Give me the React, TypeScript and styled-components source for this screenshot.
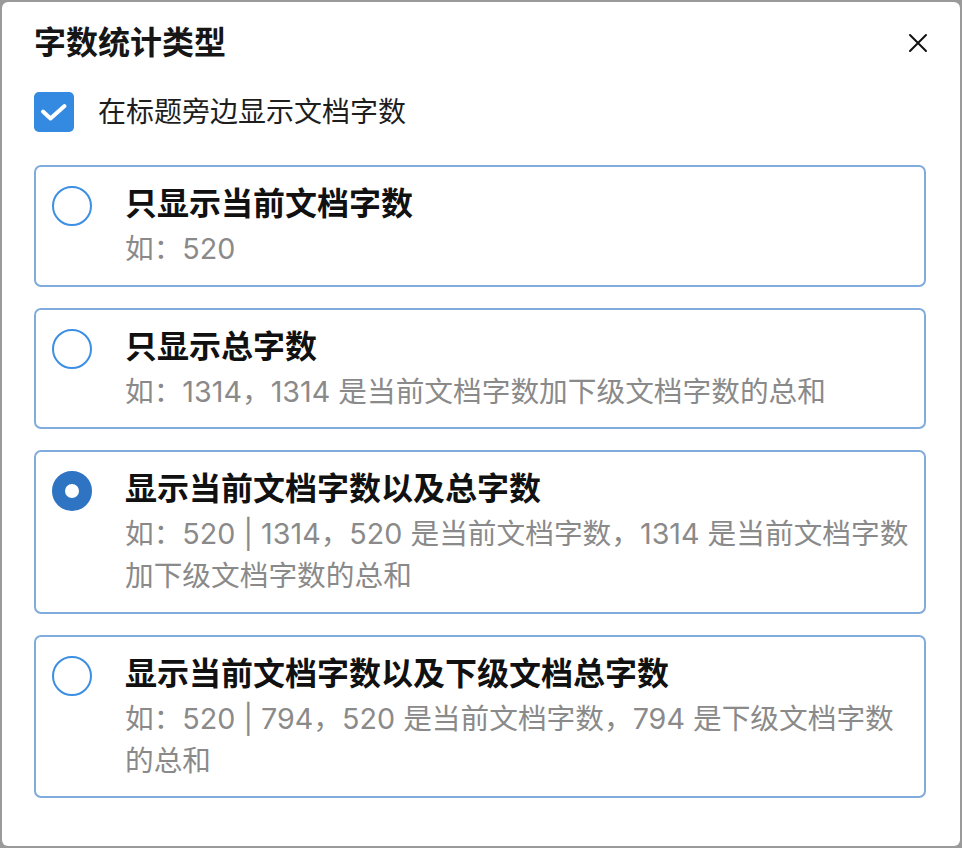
import React, { useState } from "react";
import styled, { createGlobalStyle } from "styled-components";

const GlobalStyle = createGlobalStyle`
  html, body {
    margin: 0;
    padding: 0;
    background: #9a9a9a;
  }
  body {
    font-family: Inter, "Noto Sans CJK SC", sans-serif;
  }
  * { box-sizing: border-box; }
`;

const Frame = styled.div`
  width: 962px;
  height: 848px;
  padding: 2px;
  background: #9a9a9a;
`;

const Dialog = styled.div`
  height: 100%;
  background: #ffffff;
  border-radius: 6px;
  padding: 20px 34px 0 32px;
  display: flex;
  flex-direction: column;
`;

const Header = styled.div`
  display: flex;
  align-items: center;
  justify-content: space-between;
  height: 42px;
`;

const Title = styled.h2`
  margin: 0;
  font-size: 32px;
  line-height: 42px;
  font-weight: 700;
  color: #161616;
`;

const CloseButton = styled.button`
  width: 20px;
  height: 20px;
  margin-right: -2px;
  padding: 0;
  border: none;
  background: transparent;
  display: flex;
  align-items: center;
  justify-content: center;
  cursor: pointer;
  color: #111;
`;

const CheckRow = styled.label`
  margin-top: 28px;
  display: flex;
  align-items: center;
  gap: 24px;
  cursor: pointer;
`;

const CheckBox = styled.span<{ $checked: boolean }>`
  width: 40px;
  height: 40px;
  border-radius: 5px;
  background: ${(p) => (p.$checked ? "#3489e0" : "#fff")};
  border: ${(p) => (p.$checked ? "none" : "2px solid #3489e0")};
  display: flex;
  flex-shrink: 0;
`;

const CheckLabel = styled.span`
  font-size: 28px;
  line-height: 40px;
  color: #1e1e1e;
`;

const List = styled.div`
  margin-top: 33px;
  display: flex;
  flex-direction: column;
  gap: 21px;
`;

const Card = styled.div`
  border: 2px solid #80abdd;
  border-radius: 7px;
  padding: 16px 16px 14.5px;
  display: flex;
  align-items: flex-start;
  gap: 33px;
  cursor: pointer;
`;

const Radio = styled.span<{ $checked: boolean }>`
  width: 40px;
  height: 40px;
  border-radius: 50%;
  flex-shrink: 0;
  margin-top: 3px;
  background: #fff;
  border: ${(p) => (p.$checked ? "13px solid #2f74c3" : "2px solid #3c8fe2")};
`;

const Texts = styled.div`
  display: flex;
  flex-direction: column;
  min-width: 0;
`;

const OptionTitle = styled.div`
  font-size: 32px;
  line-height: 42px;
  margin-bottom: 3px;
  font-weight: 600;
  color: #111;
`;

const Desc = styled.div`
  font-size: 28.7px;
  line-height: 42px;
  color: #8a8a8a;
  white-space: nowrap;
`;

type Option = { title: string; lines: string[] };

const options: Option[] = [
  { title: "只显示当前文档字数", lines: ["如：520"] },
  { title: "只显示总字数", lines: ["如：1314，1314 是当前文档字数加下级文档字数的总和"] },
  {
    title: "显示当前文档字数以及总字数",
    lines: ["如：520 | 1314，520 是当前文档字数，1314 是当前文档字数", "加下级文档字数的总和"],
  },
  {
    title: "显示当前文档字数以及下级文档总字数",
    lines: ["如：520 | 794，520 是当前文档字数，794 是下级文档字数", "的总和"],
  },
];

export default function App() {
  const [showCount, setShowCount] = useState(true);
  const [selected, setSelected] = useState(2);

  return (
    <>
      <GlobalStyle />
      <Frame>
        <Dialog>
          <Header>
            <Title>字数统计类型</Title>
            <CloseButton aria-label="关闭">
              <svg width="20" height="20" viewBox="0 0 20 20" fill="none">
                <path d="M2 2 L18 18 M18 2 L2 18" stroke="currentColor" strokeWidth="2" strokeLinecap="round" />
              </svg>
            </CloseButton>
          </Header>
          <CheckRow onClick={() => setShowCount(!showCount)}>
            <CheckBox $checked={showCount}>
              {showCount && (
                <svg width="40" height="40" viewBox="0 0 40 40" fill="none">
                  <path
                    d="M9 19.5 L16.5 26.5 L30.5 14"
                    stroke="#fff"
                    strokeWidth="4"
                    strokeLinecap="round"
                    strokeLinejoin="round"
                  />
                </svg>
              )}
            </CheckBox>
            <CheckLabel>在标题旁边显示文档字数</CheckLabel>
          </CheckRow>
          <List>
            {options.map((o, i) => (
              <Card key={i} onClick={() => setSelected(i)}>
                <Radio $checked={selected === i} />
                <Texts>
                  <OptionTitle>{o.title}</OptionTitle>
                  {o.lines.map((l, j) => (
                    <Desc key={j}>{l}</Desc>
                  ))}
                </Texts>
              </Card>
            ))}
          </List>
        </Dialog>
      </Frame>
    </>
  );
}
